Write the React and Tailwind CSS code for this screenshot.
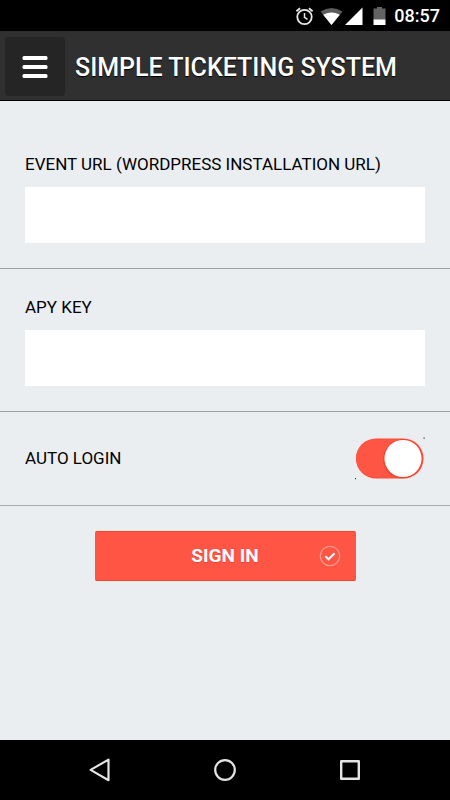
import { useState } from 'react'

function StatusBar() {
  return (
    <div className="flex h-[31px] shrink-0 items-center justify-end bg-black pr-2.5 text-white">
      {/* Alarm */}
      <svg width="20" height="20" viewBox="0 0 20 20" fill="none" stroke="#e8e8e8" className="mr-1.5">
        <circle cx="10.5" cy="11" r="7.2" strokeWidth="1.8" />
        <path d="M10.5 7v4.4l3 2" strokeWidth="1.5" />
        <path d="M2.4 5.3L6.1 2.2M18.6 5.3L14.9 2.2" strokeWidth="1.8" />
      </svg>
      {/* Wifi */}
      <svg width="23" height="20" viewBox="0 0 23 20" className="mr-0.5">
        <path d="M0.5 5.6Q11.5 -1.6 22.5 5.6L11.5 19Z" fill="#5c5c5c" />
        <path d="M3.2 8.8Q11.5 4.2 19.8 8.8L11.5 19Z" fill="#fff" />
      </svg>
      {/* Cell signal */}
      <svg width="18" height="20" viewBox="0 0 18 20" className="mr-2.5">
        <path d="M17.5 1.5V19H0Z" fill="#fff" />
      </svg>
      {/* Battery */}
      <svg width="13" height="20" viewBox="0 0 13 20" className="mr-2">
        <path d="M0.5 2.5H4V1h5v1.5h3.5V14h-12Z" fill="#636363" />
        <path d="M0.5 13.5h12V19h-12Z" fill="#fff" />
      </svg>
      <span className="text-lg font-medium">08:57</span>
    </div>
  )
}

function Header() {
  return (
    <header className="flex h-[70px] shrink-0 items-center border-b border-black bg-[#303030] pt-0.5 pl-[5px]">
      <button
        type="button"
        aria-label="Menu"
        className="flex h-[59px] w-[60px] items-center justify-center rounded bg-[#252525]"
      >
        <svg width="26" height="22" viewBox="0 0 26 22" fill="#fff">
          <rect x="0.5" y="0" width="25" height="4" rx="1.5" />
          <rect x="0.5" y="9" width="25" height="4" rx="1.5" />
          <rect x="0.5" y="18" width="25" height="4" rx="1.5" />
        </svg>
      </button>
      <h1 className="ml-2.5 pt-0.5 text-[25px] font-medium text-white [text-shadow:0_1px_1px_#000]">
        SIMPLE TICKETING SYSTEM
      </h1>
    </header>
  )
}

function Field({ id, label, value, onChange }) {
  return (
    <div className="border-b border-[#9da0a2] px-[25px] pt-6 pb-[25px]">
      <label htmlFor={id} className="block text-[17px] leading-7">
        {label}
      </label>
      <input
        id={id}
        type="text"
        value={value}
        onChange={(e) => onChange(e.target.value)}
        className="mt-[9px] block h-14 w-full bg-white px-3 text-[17px] outline-none"
      />
    </div>
  )
}

function Toggle({ id, checked, onChange }) {
  return (
    <label htmlFor={id} className="cursor-pointer">
      <input
        id={id}
        type="checkbox"
        checked={checked}
        onChange={(e) => onChange(e.target.checked)}
        className="sr-only"
      />
      <svg width="70" height="44" viewBox="0 0 70 44">
        <rect x="1" y="1.5" width="67.5" height="40" rx="20" fill={checked ? '#ff4a36' : '#9a9fa3'} />
        <rect x="1" y="2.5" width="66" height="38" rx="19" fill={checked ? '#ff5545' : '#b4b9bd'} />
        <circle cx={checked ? 47 : 21} cy="22.5" r="19" fill="#c92a18" opacity="0.35" />
        <circle cx={checked ? 48 : 22} cy="21.5" r="19" fill={checked ? '#ff3519' : '#9a9fa3'} />
        <circle cx={checked ? 48 : 22} cy="21.5" r="18.6" fill="#fff" />
        <path d="M68.5 0.5h1.2v1.2h-1.2zM0 41h1v1.2H0z" fill="#333" />
      </svg>
    </label>
  )
}

function NavBar() {
  return (
    <nav className="flex h-[60px] shrink-0 items-center justify-center gap-[101px] bg-black text-[#e4e4e4]">
      <button type="button" aria-label="Back">
        <svg width="24" height="24" viewBox="0 0 24 24" fill="none" stroke="currentColor" strokeWidth="2.2" strokeLinejoin="round">
          <path d="M20.5 1.6V22.2L2.6 11.9Z" />
        </svg>
      </button>
      <button type="button" aria-label="Home">
        <svg width="24" height="24" viewBox="0 0 24 24" fill="none" stroke="currentColor" strokeWidth="2.2">
          <circle cx="12" cy="12" r="9.8" />
        </svg>
      </button>
      <button type="button" aria-label="Recent apps">
        <svg width="24" height="24" viewBox="0 0 24 24" fill="none" stroke="currentColor" strokeWidth="2.4" strokeLinejoin="round">
          <rect x="3.2" y="3.2" width="17.6" height="17.6" />
        </svg>
      </button>
    </nav>
  )
}

export default function App() {
  const [eventUrl, setEventUrl] = useState('')
  const [apiKey, setApiKey] = useState('')
  const [autoLogin, setAutoLogin] = useState(true)

  return (
    <div className="flex min-h-screen flex-col bg-[#ebeef1] font-[Roboto,sans-serif] text-black">
      <StatusBar />
      <Header />

      <main className="grow">
        <form onSubmit={(e) => e.preventDefault()} className="pt-[25px]">
          <Field
            id="event-url"
            label="EVENT URL (WORDPRESS INSTALLATION URL)"
            value={eventUrl}
            onChange={setEventUrl}
          />
          <Field id="api-key" label="APY KEY" value={apiKey} onChange={setApiKey} />

          <div className="flex h-[94px] items-center justify-between border-b border-[#a9acaf] px-[25px]">
            <label htmlFor="auto-login" className="text-[17px]">AUTO LOGIN</label>
            <Toggle id="auto-login" checked={autoLogin} onChange={setAutoLogin} />
          </div>

          <button
            type="submit"
            className="mx-auto mt-[25px] grid h-[50px] w-[58%] grid-cols-[1fr_auto_1fr] items-center rounded-xs border-y border-[#ff4026] bg-[#ff5545] px-[15px] text-white"
          >
            <span className="col-start-2 text-[19px] font-bold [text-shadow:0_1px_1px_#f04432]">SIGN IN</span>
            <svg width="22" height="22" viewBox="0 0 22 22" fill="none" className="justify-self-end">
              <circle cx="11" cy="11" r="9.7" stroke="#ff9b90" strokeWidth="1.3" />
              <path d="M6.4 11.2L9.5 14.3L15.6 8.3" stroke="#fff" strokeWidth="2" />
            </svg>
          </button>
        </form>
      </main>

      <NavBar />
    </div>
  )
}
